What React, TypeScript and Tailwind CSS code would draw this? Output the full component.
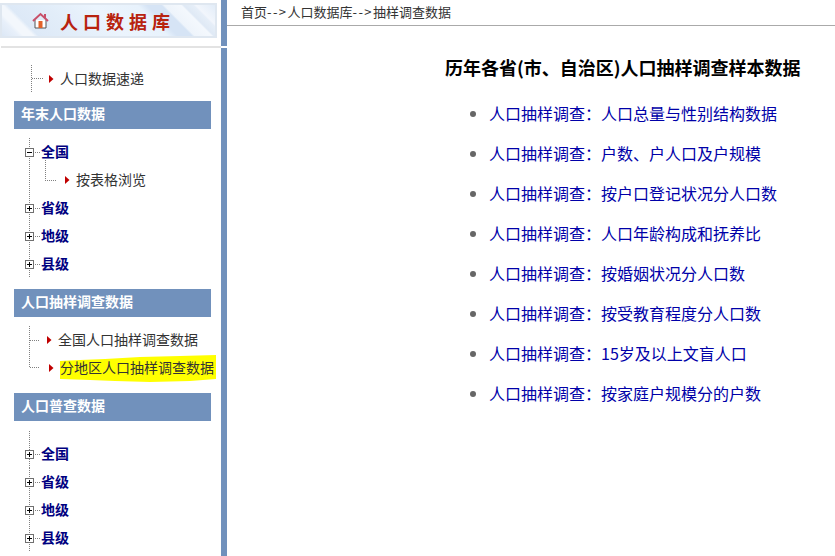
const cjk = "font-['Noto_Sans_CJK_SC','Noto_Sans',sans-serif]";

const dots = { stroke: "#808080", strokeDasharray: "1 1", shapeRendering: "crispEdges" as const };

function Arrow({ x }: { x: number }) {
  return <polygon points={`${x},10 ${x + 4.5},14 ${x},18`} fill="#c00000" />;
}

// + / - box of the tree, with dotted lines through it
function TreeBranch({ open, top = 0 }: { open?: boolean; top?: number }) {
  return (
    <svg width="41" height="28" className="shrink-0 overflow-visible">
      <line x1="29.5" y1={-top} x2="29.5" y2="28" {...dots} />
      <line x1="35" y1="14.5" x2="41" y2="14.5" {...dots} />
      <rect x="25.5" y="10.5" width="8" height="8" fill="#fff" stroke="#707070" shapeRendering="crispEdges" />
      <line x1="27" y1="14.5" x2="32" y2="14.5" stroke="#000" shapeRendering="crispEdges" />
      {!open && <line x1="29.5" y1="12" x2="29.5" y2="17" stroke="#000" shapeRendering="crispEdges" />}
    </svg>
  );
}

function NodeRow({ label, open, top }: { label: string; open?: boolean; top?: number }) {
  return (
    <div className="flex h-7 items-center">
      <TreeBranch open={open} top={top} />
      <span className="pb-0.5 text-sm font-bold text-[#000080]">{label}</span>
    </div>
  );
}

function ChildRow() {
  return (
    <div className="flex h-7 items-center">
      <svg width="76" height="28" className="shrink-0 overflow-visible">
        <line x1="29.5" y1="0" x2="29.5" y2="28" {...dots} />
        <line x1="45.5" y1="-6" x2="45.5" y2="15" {...dots} />
        <line x1="45" y1="14.5" x2="57" y2="14.5" {...dots} />
        <Arrow x={65} />
      </svg>
      <span className="pb-0.5 text-sm text-[#333]">按表格浏览</span>
    </div>
  );
}

function SectionTitle({ label }: { label: string }) {
  return (
    <div className="ml-3.5 flex h-7 w-[197px] items-center bg-[#7191bc] pb-1 pl-[7px] text-sm font-bold text-white">
      {label}
    </div>
  );
}

function HouseIcon() {
  return (
    <svg width="17" height="17" viewBox="0 0 17 17" className="shrink-0">
      <path d="M3 8v8h11V8" fill="#fff" stroke="#555" strokeWidth="1" />
      <path d="M1 9l7.5-7L16 9" fill="none" stroke="#c8506a" strokeWidth="2" />
      <rect x="12" y="2" width="2" height="4" fill="#c8506a" />
      <rect x="6.5" y="9" width="4" height="7" fill="#e2622a" />
    </svg>
  );
}

const links = [
  "人口总量与性别结构数据",
  "户数、户人口及户规模",
  "按户口登记状况分人口数",
  "人口年龄构成和抚养比",
  "按婚姻状况分人口数",
  "按受教育程度分人口数",
  "15岁及以上文盲人口",
  "按家庭户规模分的户数",
];

export default function App() {
  return (
    <div className={`flex h-screen overflow-hidden bg-white ${cjk}`}>
      <aside className="w-[221px] shrink-0">
        <div className="pt-[3px]">
          <div className="flex h-[35px] w-[217px] items-center border-2 border-[#dfe7f0] bg-[linear-gradient(45deg,#dce7f5_0%,#e8f0fa_7%,#f3f7fc_9%,#f3f7fc_13%,#dde9f7_15%,#e2edf9_30%,#ebf4fd_50%,#e8f2fc_68%,#d6e4f5_72%,#d6e4f5_78%,#eef4fb_79%,#f4f8fd_86%,#dfe9f5_87%,#e6eef8_91%,#f2f6fc_92%,#e2ecf8_100%)] pl-[30px]">
            <HouseIcon />
            <span className="ml-[11px] text-lg leading-none font-bold tracking-[5px] text-[#b8230f]">人口数据库</span>
          </div>
        </div>
        <div className="mt-2 ml-px h-0.5 bg-[#e3e3e3]" />

        <div className="mt-[17px] flex h-7 items-center">
          <svg width="60" height="28" className="shrink-0">
            <line x1="31.5" y1="0" x2="31.5" y2="28" {...dots} />
            <line x1="32" y1="13.5" x2="43" y2="13.5" {...dots} />
            <Arrow x={49} />
          </svg>
          <span className="pb-0.5 text-sm text-[#333]">人口数据速递</span>
        </div>

        <div className="mt-2"><SectionTitle label="年末人口数据" /></div>
        <div className="mt-[9px]">
          <NodeRow label="全国" open />
          <ChildRow />
          <NodeRow label="省级" />
          <NodeRow label="地级" />
          <NodeRow label="县级" />
        </div>

        <div className="mt-[11px]"><SectionTitle label="人口抽样调查数据" /></div>
        <div className="mt-[9px]">
          <div className="flex h-7 items-center">
            <svg width="58" height="28" className="shrink-0">
              <line x1="29.5" y1="0" x2="29.5" y2="28" {...dots} />
              <line x1="30" y1="14.5" x2="40" y2="14.5" {...dots} />
              <Arrow x={47} />
            </svg>
            <span className="pb-0.5 text-sm text-[#333]">全国人口抽样调查数据</span>
          </div>
          <div className="flex h-7 items-start">
            <svg width="60" height="28" className="shrink-0">
              <line x1="29.5" y1="0" x2="29.5" y2="14" {...dots} />
              <line x1="30" y1="13.5" x2="40" y2="13.5" {...dots} />
              <Arrow x={49} />
            </svg>
            {/* marker-pen highlight drawn over the screenshot, rough edges */}
            <span className="h-[29px] w-[156px] bg-[#ffff00] text-sm leading-[26px] text-[#333] [clip-path:polygon(0_7px,20px_6px,45px_5px,80px_3px,120px_2px,156px_1px,156px_25px,130px_27px,90px_28px,55px_27px,30px_26px,0_25px)]">
              分地区人口抽样调查数据
            </span>
          </div>
        </div>

        <div className="mt-[11px]"><SectionTitle label="人口普查数据" /></div>
        <div className="mt-[19px]">
          <NodeRow label="全国" top={9} />
          <NodeRow label="省级" />
          <NodeRow label="地级" />
          <NodeRow label="县级" />
        </div>
      </aside>

      <div className="relative w-1.5 shrink-0 bg-[#7191bc]">
        <div className="absolute top-[46px] left-0 h-0.5 w-full bg-white" />
      </div>

      <main className="min-w-0 flex-1">
        <div className="h-[26px] border-b border-[#aaa] pl-[14px] text-[13px] leading-[24px] text-[#333]">
          首页<span className="tracking-[1.4px]">--&gt;</span>人口数据库<span className="tracking-[1.4px]">--&gt;</span>抽样调查数据
        </div>
        <h1 className="mt-7 ml-[218px] text-lg leading-[26px] font-bold text-black">
          历年各省(市、自治区)人口抽样调查样本数据
        </h1>
        <ul className="mt-[13px] ml-[262px] list-disc text-[#666]">
          {links.map((item) => (
            <li key={item} className="h-10 text-base leading-10">
              <a href="#" className="text-[#0000a8]">人口抽样调查：{item}</a>
            </li>
          ))}
        </ul>
      </main>
    </div>
  );
}
